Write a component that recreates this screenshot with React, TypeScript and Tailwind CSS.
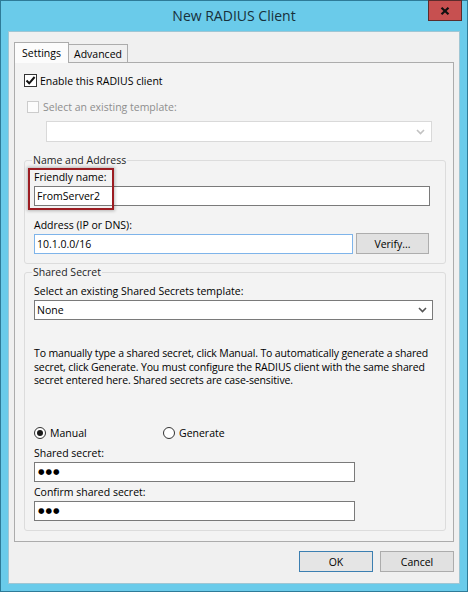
import React from "react";

function Chevron({ color }: { color: string }) {
  return (
    <svg width="9" height="6" viewBox="0 0 9 6">
      <path d="M1 1 L4.5 4.5 L8 1" fill="none" stroke={color} strokeWidth="1.6" />
    </svg>
  );
}

function Dots() {
  return (
    <span className="text-[7.5px] leading-[18px] tracking-[1px] text-black font-['DejaVu_Sans',sans-serif]">
      ●●●
    </span>
  );
}

export default function App() {
  return (
    <div className="w-[468px] h-[592px] bg-[#6acbea] border border-[#2e7b98] flex flex-col font-['Open_Sans',sans-serif] text-[10.5px] leading-[14px] text-black">
      {/* Title bar */}
      <div className="relative h-[30px] flex items-center justify-center">
        <span className="text-[14px] leading-[18px] text-[#17303b] -mt-[1px]">New RADIUS Client</span>
        <div className="absolute right-[5px] -top-[1px] w-[34px] h-[21px] bg-[#c75050] border border-[#5a2c2c] flex items-center justify-center">
          <svg width="10" height="8" viewBox="0 0 10 8">
            <path d="M1.5 0.8 L8.5 7.2 M8.5 0.8 L1.5 7.2" stroke="#111" strokeWidth="2.2" />
          </svg>
        </div>
      </div>

      {/* Client area */}
      <div className="mx-[7px] w-[452px] h-[553px] bg-[#f0f0f0] border border-[#9fc6d4] flex flex-col">
        {/* Tabs */}
        <div className="relative z-10 flex items-end ml-[5px] mt-[10px] h-[21px] -mb-[1px]">
          <div className="w-[55px] h-[21px] border border-b-0 border-[#acacac] bg-[#fcfcfc] flex items-center justify-center">
            Settings
          </div>
          <div className="w-[59px] h-[19px] border border-l-0 border-[#acacac] bg-[#f0f0f0] flex items-center justify-center">
            Advanced
          </div>
        </div>

        {/* Tab panel */}
        <div className="ml-[5px] w-[440px] h-[480px] border border-[#acacac] bg-[#f3f3f3] flex flex-col">
          {/* Enable checkbox */}
          <div className="flex items-center ml-[9px] mt-[11px] h-[13px] gap-[3px]">
            <div className="w-[13px] h-[13px] border border-[#333333] bg-white flex items-center justify-center">
              <svg width="11" height="11" viewBox="0 0 11 11">
                <path d="M1.5 5.5 L4.2 8.3 L9.6 2" fill="none" stroke="#111" strokeWidth="2" />
              </svg>
            </div>
            <span className="whitespace-nowrap">Enable this RADIUS client</span>
          </div>

          {/* Disabled template checkbox */}
          <div className="flex items-center ml-[12px] mt-[13px] h-[13px] gap-[4px]">
            <div className="w-[12px] h-[12px] border border-[#cccccc] bg-[#fcfcfc]" />
            <span className="whitespace-nowrap text-[#8e8e8e]">Select an existing template:</span>
          </div>

          {/* Disabled combo */}
          <div className="ml-[31px] mt-[8px] w-[386px] h-[21px] border border-[#d9d9d9] bg-white flex items-center justify-end pr-[6px]">
            <Chevron color="#c2c2c2" />
          </div>

          {/* Name and Address */}
          <fieldset className="ml-[9px] mt-[11px] w-[422px] border border-[#dcdcdc] rounded-[3px] px-[9px] pb-[9px]">
            <legend className="-ml-[2px] px-[1px] leading-[14px] text-[#1e1e1e]">Name and Address</legend>
            <div className="relative mt-[3px] flex flex-col">
              <div className="absolute -left-[6px] -top-[2px] w-[86px] h-[42px] border-2 border-[#9c1c22] shadow-[0_0_3px_1px_rgba(0,0,0,0.25)]" />
              <span className="h-[14px] whitespace-nowrap">Friendly name:</span>
              <div className="mt-[2px] w-[396px] h-[20px] border border-[#7a7a7a] bg-white pl-[2px] flex items-center">
                FromServer2
              </div>
            </div>
            <div className="mt-[12px] h-[14px] whitespace-nowrap">Address (IP or DNS):</div>
            <div className="mt-[1px] flex items-start gap-[3px]">
              <div className="mt-[1px] w-[319px] h-[20px] border border-[#7eb4ea] bg-white pl-[2px] flex items-center">
                10.1.0.0/16
              </div>
              <div className="w-[73px] h-[21px] border border-[#adadad] bg-[#e1e1e1] flex items-center justify-center">
                Verify...
              </div>
            </div>
          </fieldset>

          {/* Shared Secret */}
          <fieldset className="ml-[9px] mt-[1px] w-[422px] border border-[#dcdcdc] rounded-[3px] px-[9px] pb-[9px]">
            <legend className="-ml-[2px] px-[1px] leading-[14px] text-[#1e1e1e]">Shared Secret</legend>
            <div className="mt-[5px] h-[14px] whitespace-nowrap">Select an existing Shared Secrets template:</div>
            <div className="mt-[2px] w-[399px] h-[20px] border border-[#7a7a7a] bg-white pl-[2px] pr-[5px] flex items-center justify-between">
              <span>None</span>
              <Chevron color="#555555" />
            </div>
            <p className="mt-[27px] leading-[13.5px] tracking-[-0.13px] whitespace-nowrap">
              To manually type a shared secret, click Manual. To automatically generate a shared
              <br />
              secret, click Generate. You must configure the RADIUS client with the same shared
              <br />
              secret entered here. Shared secrets are case-sensitive.
            </p>
            <div className="mt-[38px] h-[14px] flex items-center">
              <div className="w-[129px] flex items-center gap-[4px]">
                <div className="w-[12px] h-[12px] rounded-full border border-[#333333] bg-white flex items-center justify-center">
                  <div className="w-[6px] h-[6px] rounded-full bg-[#1a1a1a]" />
                </div>
                <span>Manual</span>
              </div>
              <div className="flex items-center gap-[4px]">
                <div className="w-[12px] h-[12px] rounded-full border border-[#333333] bg-white" />
                <span>Generate</span>
              </div>
            </div>
            <div className="mt-[6px] h-[14px] whitespace-nowrap">Shared secret:</div>
            <div className="mt-[2px] w-[321px] h-[20px] border border-[#7a7a7a] bg-white pl-[3px] flex items-center">
              <Dots />
            </div>
            <div className="mt-[3px] h-[14px] whitespace-nowrap">Confirm shared secret:</div>
            <div className="mt-[2px] w-[321px] h-[20px] border border-[#7a7a7a] bg-white pl-[3px] flex items-center">
              <Dots />
            </div>
          </fieldset>
        </div>

        {/* Buttons */}
        <div className="mt-[9px] pr-[5px] flex justify-end gap-[7px]">
          <div className="w-[74px] h-[21px] border border-[#3c7fb1] bg-[#e5e5e5] flex items-center justify-center">
            OK
          </div>
          <div className="w-[74px] h-[21px] border border-[#acacac] bg-[#e1e1e1] flex items-center justify-center">
            Cancel
          </div>
        </div>
      </div>
    </div>
  );
}
